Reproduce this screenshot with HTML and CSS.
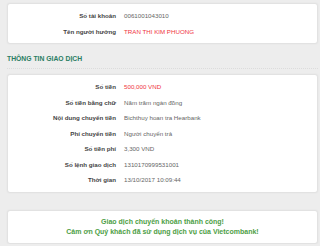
FILE: index.html
```html
<!DOCTYPE html>
<html lang="vi">
<head>
    <meta charset="UTF-8">
    <meta name="viewport" content="width=device-width, initial-scale=1.0">
    <link rel="stylesheet" href="styles.css">
    <title>Xác nhận giao dịch</title>
</head>

<body>
    <div class="page">
        <div class="card">
            <div class="info">
                <span class="label">Số tài khoản</span>
                <span class="value">0061001043010</span>

                <span class="label">Tên người hưởng</span>
                <span class="value red">TRAN THI KIM PHUONG</span>
            </div>
        </div>

        <h2 class="section-title">THÔNG TIN GIAO DỊCH</h2>

        <div class="card">
            <div class="info">
                <span class="label">Số tiền</span>
                <span class="value red">500,000 VND</span>

                <span class="label">Số tiền bằng chữ</span>
                <span class="value">Năm trăm ngàn đồng</span>

                <span class="label">Nội dung chuyển tiền</span>
                <span class="value">Bichthuy hoan tra Hearbank</span>

                <span class="label">Phí chuyển tiền</span>
                <span class="value">Người chuyển trả</span>

                <span class="label">Số tiền phí</span>
                <span class="value">3,300 VND</span>

                <span class="label">Số lệnh giao dịch</span>
                <span class="value">1310170999531001</span>

                <span class="label">Thời gian</span>
                <span class="value">13/10/2017 10:09:44</span>
            </div>
        </div>

        <div class="card success">
            <p>Giao dịch chuyển khoản thành công!</p>
            <p>Cảm ơn Quý khách đã sử dụng dịch vụ của Vietcombank!</p>
        </div>
    </div>
</body>

</html>
```

FILE: styles.css
```css
body {
    font-family: 'Liberation Sans', Arial, sans-serif;
    margin: 0;
    padding: 0;
    background-color: #ededed;
    font-size: 6.2px;
}

.page {
    padding: 3px 2px 0 7px;
}

.card {
    background-color: #ffffff;
    border: 1px solid #e2e2e2;
    border-radius: 3px;
    box-shadow: 0 0 2px rgba(0, 0, 0, 0.06);
    padding: 4px 0;
}

.info {
    display: grid;
    grid-template-columns: 108px 1fr;
    column-gap: 8px;
    line-height: 15.5px;
}

.label {
    text-align: right;
    font-weight: bold;
    color: #444;
}

.value {
    color: #666;
}

.red {
    color: #ef3340;
}

.section-title {
    margin: 10px 0 5px;
    padding-bottom: 4px;
    border-bottom: 1px dotted #dcdcdc;
    font-size: 6.8px;
    line-height: 10px;
    color: #2a7d63;
}

.success {
    margin-top: 17px;
    padding: 6px 0;
    text-align: center;
    font-size: 7px;
    font-weight: bold;
    color: #4d9e45;
}

.success p {
    margin: 0;
    line-height: 10px;
}
```
